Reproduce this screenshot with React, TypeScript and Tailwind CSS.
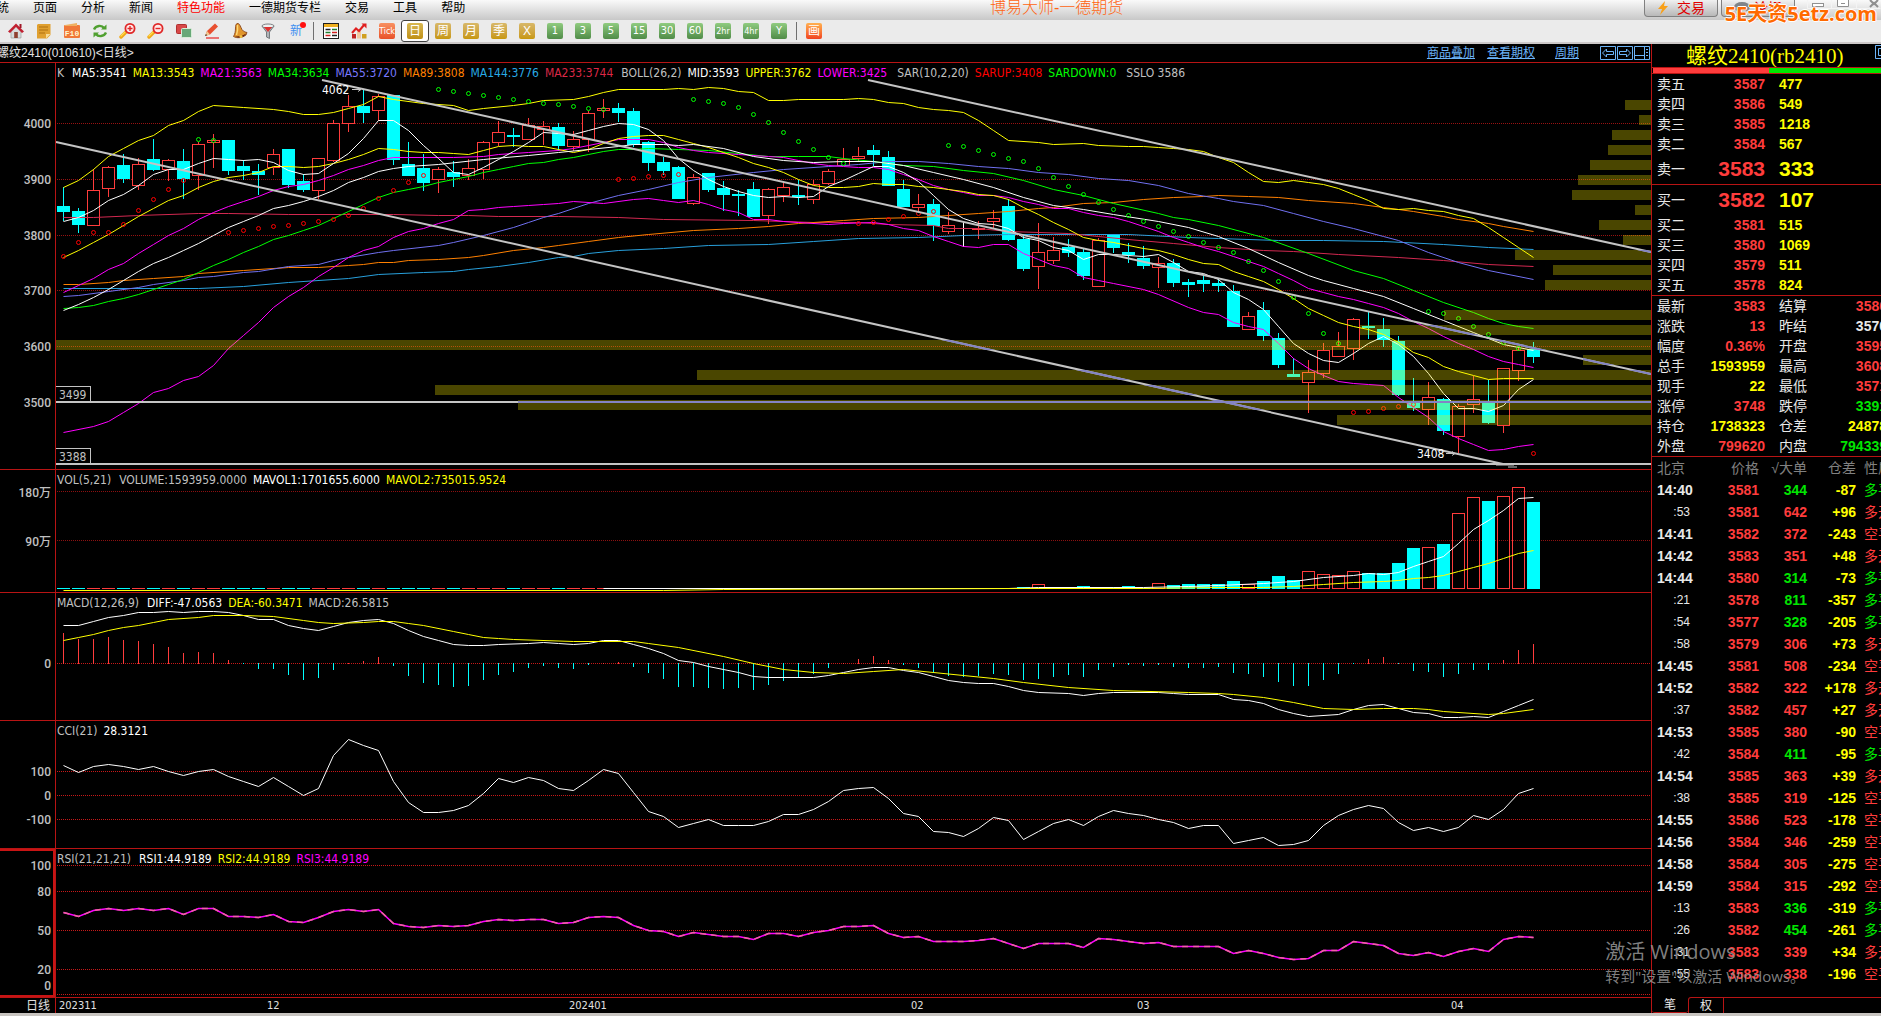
import type { ReactNode } from "react";

type Kind = "up" | "down" | "flat";

interface Quote {
  label: string;
  price: string;
  size: string;
}

// kind, high, low, body top, body bottom (thirds of a pixel under the header)
const CANDLES = `
d381,484,438,455 d444,519,453,494 u326,494,391,494 u317,410,322,385 d282,369,315,356
u294,389,313,374 d237,333,297,329 u297,363,301,328 d267,416,303,356 u246,390,253,346
u222,324,240,247 d240,345,240,332 d300,360,318,332 d312,405,333,344 u267,345,283,322
d267,384,267,374 d343,396,363,389 u295,416,295,391 u180,306,190,299 u105,216,139,190
d88,189,138,158 u102,184,109,151 d106,315,106,299 d246,348,312,347 d282,393,324,368
u321,399,328,358 d303,381,336,350 u297,360,325,344 u243,357,247,326 u183,259,217,247
d204,261,225,231 u174,240,196,238 u183,255,198,206 d189,273,201,258 u213,274,237,257
u153,276,160,238 u117,174,145,149 d129,186,144,158 d144,261,153,255 d243,333,246,308
d291,345,306,332 d318,417,321,417 u342,435,352,428 d339,396,339,389 d363,453,384,404
d390,468,402,407 d366,471,387,471 u384,492,388,464 u369,426,382,404 d360,435,405,411
u360,432,373,416 u327,375,334,368 u264,318,298,314 u261,306,289,293 d255,318,270,285
d273,378,291,378 d360,441,387,441 u402,453,433,442 d417,543,432,498 u456,522,496,514
f486,560,503,505 u483,537,503,508 u450,504,475,484 d417,543,438,540 d528,633,537,627
u489,687,577,617 u531,612,571,599 d537,591,560,579 d567,660,576,647 u534,677,541,677
d525,579,525,564 d549,609,576,585 d558,627,594,618 u591,684,610,622 d597,681,609,669
d657,711,666,675 d648,696,660,672 d657,696,669,678 d675,801,693,801 u756,808,769,808
d726,843,750,828 d819,924,834,915 d894,951,942,951 u900,1059,937,967 u849,954,871,938
u816,889,859,889 u774,900,778,865 d756,837,798,804 d774,861,807,840 d828,1008,843,1005
d954,1053,1029,1044 u966,1095,1012,1048 d1014,1125,1017,1113 u1032,1180,1039,1129
u948,1059,1018,1031 d960,1092,1026,1089 u925,1119,925,1094 u865,963,871,931 d846,909,867,891`
  .trim()
  .split(/\s+/)
  .map((s) => {
    const kind: Kind = s[0] === "u" ? "up" : s[0] === "d" ? "down" : "flat";
    const [high, low, top, bottom] = s.slice(1).split(",").map(Number);
    return { kind, high, low, top, bottom };
  });

// "bar,value" pairs
const MA5 =
  "0,484 1,472 2,451 3,421 4,403 5,376 6,343 7,326 8,328 9,310 10,295 11,296 12,299 13,298 14,306 15,331 16,343 17,338 18,309 19,278 20,235 21,179 22,179 23,209 24,256 25,295 26,337 27,343 28,321 29,297 30,273 31,246 32,217 33,219 34,222 35,210 36,198 37,190 38,191 39,206 40,240 41,294 42,331 43,358 44,378 45,394 46,404 47,412 48,409 49,412 50,407 51,378 52,360 53,340 54,317 55,317 56,336 57,364 58,406 59,447 60,475 61,488 62,493 63,503 64,530 65,540 66,560 67,571 68,597 69,583 70,582 71,584 72,588 73,583 74,607 75,632 76,640 77,657 78,697 79,718 80,748 81,798 82,850 83,880 84,901 85,907 86,878 87,850 88,828 89,852 90,888 91,940 92,1000 93,1043 94,1045 95,1054 96,1036 97,988 98,958";
const MA13 =
  "0,592 1,570 2,547 3,521 4,494 5,468 6,443 7,421 8,406 9,381 10,364 11,352 12,344 13,335 14,319 15,319 16,322 17,319 18,308 19,296 20,283 21,265 22,268 23,274 24,277 25,277 26,280 27,283 28,270 29,259 30,254 31,257 32,259 33,267 34,277 35,267 36,250 37,234 38,229 39,226 40,226 41,237 42,249 43,262 44,275 45,291 46,309 47,322 48,337 49,358 50,376 51,381 52,382 53,377 54,368 55,371 56,373 57,377 58,382 59,386 60,393 61,402 62,406 63,418 64,442 65,463 66,487 67,508 68,530 69,540 70,545 71,555 72,563 73,571 74,583 75,597 76,610 77,613 78,632 79,647 80,664 81,686 82,715 83,745 84,766 85,787 86,798 87,807 88,822 89,846 90,877 91,892 92,919 93,934 94,944 95,956 96,953 97,953 98,955";
const MA21 =
  "0,697 1,674 2,655 3,628 4,608 5,580 6,553 7,526 8,505 9,478 10,457 11,439 12,424 13,409 14,391 15,379 16,373 17,361 18,346 19,328 20,316 21,301 22,290 23,290 24,290 26,292 28,289 29,282 31,277 33,269 34,264 35,256 36,247 37,237 38,236 39,238 40,247 41,262 42,270 43,277 45,281 47,289 48,292 49,301 50,309 51,315 52,317 53,321 54,322 55,328 56,343 57,358 58,374 59,387 60,395 61,404 62,406 63,412 64,424 65,433 66,443 67,445 68,457 69,466 70,472 71,484 72,498 73,512 74,530 75,547 76,562 77,574 78,588 79,603 80,618 81,638 82,661 83,683 84,697 85,708 86,718 87,730 88,742 89,760 90,782 91,805 92,828 93,850 94,868 95,889 96,902 97,911 98,921";
const MID =
  "0,751 1,733 2,712 3,688 4,661 5,634 6,610 7,592 8,571 9,550 10,526 11,502 12,484 13,465 14,445 15,434 16,422 17,408 18,390 19,367 20,352 21,334 22,325 23,319 25,311 28,298 31,285 33,275 35,268 37,257 38,253 40,253 41,256 42,253 44,265 46,289 48,301 50,305 52,304 54,303 56,315 58,337 60,358 62,382 64,412 66,436 68,448 70,461 73,482 75,500 77,528 79,565 81,605 83,645 84,661 86,684 88,709 90,744 92,780 94,816 95,835 96,852 97,861 98,870";
const MA34 =
  "0,745 1,742 2,736 3,724 4,715 5,703 6,688 7,673 8,658 9,637 10,616 11,597 12,577 13,559 14,538 15,525 16,511 17,496 18,475 19,453 20,433 21,411 22,397 23,388 24,378 25,366 26,357 27,348 28,337 29,328 30,319 31,310 32,305 33,298 34,292 35,281 36,274 37,268 38,267 39,265 41,267 43,271 45,279 47,287 49,289 51,289 52,293 54,303 56,315 58,319 60,329 62,340 64,360 66,387 68,405 70,430 73,460 74,472 75,478 77,495 80,530 83,580 86,630 88,653 90,690 92,725 94,757 95,774 96,788 97,797 98,803";
const MA55 =
  "0,709 1,706 3,694 5,682 6,673 8,660 9,652 10,649 12,637 13,634 15,619 17,611 18,601 19,592 21,575 22,571 25,554 26,545 28,526 30,501 31,487 32,472 33,460 35,430 37,406 39,386 41,367 43,352 46,337 48,328 51,317 53,311 55,304 57,304 59,310 61,317 63,325 65,337 67,343 69,353 71,361 73,376 75,398 77,415 78,423 80,436 82,460 84,484 86,503 88,527 89,541 91,575 93,605 95,630 98,658";
const MA89 =
  "0,673 1,673 3,667 4,661 6,653 8,647 9,640 12,629 15,622 17,622 19,616 20,613 21,607 22,607 23,601 25,596 27,590 28,584 30,571 32,560 33,556 35,544 37,532 39,522 42,511 45,505 47,498 49,490 52,481 54,473 57,470 59,466 61,460 63,453 65,445 66,440 68,430 70,425 72,418 74,411 76,409 77,406 79,409 81,412 83,421 86,430 88,440 90,452 92,467 93,476 95,490 96,498 98,512";
const MA144 =
  "0,685 9,685 12,679 15,667 19,655 21,643 24,635 26,632 27,626 29,617 31,606 33,592 34,588 35,580 37,571 40,563 43,556 47,551 50,544 53,535 57,530 60,526 63,522 66,523 71,523 75,530 77,535 81,540 84,541 88,544 92,553 95,562 98,566";
const MA233 =
  "0,472 2,470 5,464 9,460 11,460 15,463 22,463 25,466 27,466 29,469 33,469 37,472 40,478 46,481 50,487 53,487 55,492 58,496 59,503 61,505 63,513 67,520 69,528 71,537 74,549 77,562 80,571 82,574 85,583 89,592 92,599 95,611 98,619";
const UPPER =
  "0,381 1,360 2,327 3,288 4,264 5,240 6,226 7,196 8,181 9,154 10,136 12,141 14,148 15,154 16,163 17,163 18,157 19,145 20,133 21,109 22,118 24,130 26,136 27,149 28,145 30,136 31,128 32,121 34,118 35,109 36,97 37,88 40,88 41,85 42,88 43,82 44,85 45,94 46,97 47,121 48,121 49,118 52,118 53,115 54,118 55,127 56,130 57,142 58,148 59,151 60,157 61,181 62,211 63,241 65,247 66,253 68,248 69,254 71,259 72,257 73,260 74,265 75,266 76,273 77,290 78,306 79,335 80,364 81,367 82,361 83,367 84,373 85,385 86,403 87,421 88,445 89,447 90,443 91,451 92,452 93,466 94,475 95,500 96,530 97,562 98,590";
const LOWER =
  "0,1117 2,1099 3,1084 4,1057 5,1029 6,997 7,985 8,961 9,947 10,914 11,865 12,824 13,787 14,742 15,709 16,681 17,649 18,621 19,592 20,571 21,559 22,532 23,514 24,503 25,490 26,478 27,451 28,446 29,442 30,437 31,436 32,433 33,430 34,424 36,430 38,418 39,415 40,421 41,427 42,421 43,433 44,448 45,457 46,478 47,478 48,484 49,487 51,493 52,490 54,487 55,493 56,505 57,511 58,529 59,544 60,559 61,562 62,553 63,553 64,580 65,597 66,615 67,625 68,652 69,659 70,668 72,688 73,703 75,740 76,755 77,763 78,787 79,797 80,808 81,850 82,893 83,925 84,945 85,963 86,968 87,973 88,976 89,1010 90,1042 91,1072 92,1112 93,1133 94,1152 95,1171 96,1168 97,1159 98,1153";
const SAR_DOWN =
  "9,238 10,241 25,88 26,94 27,100 28,106 29,112 30,118 31,124 32,130 33,133 34,139 35,145 36,148 42,118 43,124 44,130 45,142 46,163 47,187 48,217 49,244 50,268 51,292 52,310 59,256 60,259 61,271 62,283 63,295 64,304 65,325 66,352 67,379 68,403 69,427 70,448 71,466 72,484 73,499 74,514 75,529 76,547 77,562 78,577 79,604 80,631 81,664 82,712 83,760 84,820 85,850 91,754 92,760 93,775 94,799 95,823 96,845 97,865";
const SAR_UP =
  "0,589 1,547 2,517 3,517 4,493 5,451 6,418 7,388 8,361 11,517 12,511 13,505 14,499 15,496 16,490 17,484 18,478 19,466 20,445 21,415 22,391 23,367 24,346 37,358 38,355 39,349 40,346 41,343 53,490 54,487 55,478 56,469 57,460 58,454 86,1057 87,1054 88,1045 89,1039 90,1033 98,1180";

// volume profile: left edge of each row, 15px apart from y=100
const PROFILE = [
  1625, 1639, 1612, 1608, 1590, 1578, 1572, 1635, 1599, 1623, 1515, 1553, 1545, 1651, 1444, 1360, 56,
  1583, 697, 435, 518, 1337,
];

const VOLUME =
  "64,359 65,350 68,356 69,357 70,358 71,356 72,360 73,348 74,352 75,350 76,350 77,350 78,341 79,349 80,341 81,327 82,338 83,314 84,322 85,325 86,314 87,320 88,320 89,290 90,248 91,244 92,237 93,150 94,105 95,116 96,102 97,77 98,118";
const MAVOL1 =
  "36,362 63,362 65,359 68,357 70,358 72,358 75,355 77,352 80,348 82,340 84,329 86,323 87,320 88,322 89,315 90,300 91,286 92,270 93,235 94,195 95,170 96,142 97,108 98,103";
const MAVOL2 =
  "0,366 40,366 44,363 64,362 72,360 77,359 80,357 82,354 84,349 86,345 88,341 89,339 90,334 91,329 92,324 93,312 94,301 95,290 96,277 97,263 98,254";

const MACD_BARS = [
  488, 505, 505, 499, 508, 510, 519, 527, 544, 541, 544, 564, 575, 589, 589, 606, 620, 615, 592, 572,
  567, 556, 581, 609, 629, 635, 640, 637, 620, 606, 598, 587, 581, 587, 589, 578, 572, 570, 584, 601,
  618, 640, 640, 643, 646, 643, 649, 635, 623, 615, 604, 587, 572, 561, 553, 564, 578, 587, 601, 609,
  612, 609, 604, 606, 620, 618, 612, 606, 612, 592, 584, 578, 581, 578, 584, 587, 587, 584, 601, 604,
  612, 626, 637, 637, 620, 604, 575, 561, 556, 575, 595, 598, 612, 604, 592, 592, 564, 536, 519,
];
const DIFF =
  "0,464 1,464 2,455 3,444 4,438 5,430 6,430 7,427 8,430 9,427 10,425 11,430 12,438 13,449 14,449 15,464 16,475 17,478 18,469 19,458 20,452 21,447 22,461 23,478 24,495 25,507 26,518 27,523 28,523 29,518 31,515 32,512 33,517 34,520 35,515 36,509 37,507 38,518 39,529 40,543 41,563 42,571 43,582 44,590 45,599 46,610 47,613 50,613 51,606 52,598 53,589 54,583 55,585 56,593 57,599 58,610 59,619 60,627 61,630 62,630 63,636 64,650 65,653 67,656 68,664 69,658 70,653 73,653 74,658 75,661 77,661 78,675 79,678 80,686 81,703 82,714 83,723 85,717 86,703 87,692 88,687 89,700 90,711 91,714 92,726 93,726 94,723 95,726 96,709 97,690 98,675";
const DEA =
  "0,509 1,500 2,492 3,480 4,472 5,464 6,458 7,449 9,444 10,438 12,438 14,441 16,452 17,458 18,461 20,458 21,455 22,455 23,461 24,466 26,483 27,492 28,498 29,503 30,506 34,511 38,511 39,515 41,528 44,554 46,572 48,589 50,598 52,600 54,594 56,590 58,597 60,606 62,616 64,625 67,641 70,650 75,653 77,656 78,661 80,669 82,683 83,692 84,698 86,701 88,698 90,700 91,703 92,709 95,717 96,714 98,703";
const CCI =
  "0,860 1,881 2,864 3,858 4,864 5,870 6,864 7,878 8,889 9,878 10,872 11,892 12,906 13,918 14,895 15,920 16,946 17,926 18,833 19,786 20,805 21,819 22,904 23,965 24,994 25,994 26,988 27,974 28,940 29,898 30,909 31,895 32,903 33,926 34,932 35,901 36,872 37,884 38,935 39,991 40,1005 41,1036 42,1025 43,1013 44,1028 45,1030 46,1030 47,1019 48,999 49,997 50,985 51,962 52,932 53,926 54,923 55,954 56,996 57,1005 58,1047 59,1050 60,1061 61,1039 62,1008 63,1016 64,1070 65,1045 66,1025 67,1013 68,1030 69,1005 70,988 71,996 72,1002 73,1013 74,1022 75,1039 76,1028 77,1028 78,1081 79,1073 80,1064 81,1087 82,1084 83,1073 84,1028 85,1002 86,985 87,974 88,980 89,1022 90,1042 91,1036 92,1047 93,1036 94,1002 95,1011 96,985 97,940 98,926";
const RSI =
  "0,1276 1,1287 2,1270 3,1262 4,1270 5,1264 6,1268 7,1264 8,1279 9,1264 10,1264 11,1287 12,1287 13,1290 14,1279 15,1301 16,1304 17,1290 18,1273 19,1267 20,1273 21,1267 22,1307 23,1315 24,1318 25,1312 26,1315 27,1312 28,1301 29,1295 30,1298 31,1293 32,1293 33,1307 34,1304 35,1290 36,1287 37,1290 38,1312 39,1324 40,1329 41,1343 42,1332 43,1338 44,1341 45,1341 46,1352 47,1335 48,1335 49,1341 50,1332 51,1324 52,1315 53,1315 54,1312 55,1335 56,1346 57,1343 58,1357 59,1357 60,1357 61,1354 62,1349 63,1363 64,1377 65,1363 66,1363 67,1363 68,1374 69,1349 70,1352 71,1357 72,1363 73,1360 74,1371 77,1371 78,1391 79,1383 80,1391 81,1402 82,1408 83,1405 84,1383 85,1381 86,1357 87,1363 88,1368 89,1391 90,1397 91,1388 92,1399 93,1384 94,1377 95,1386 96,1352 97,1343 98,1346";

const barX = (i: number) => 63 + i * 15;
const priceY = (v: number) => Math.round(60 + v / 3);
const subY = (v: number) => Math.round(460 + v / 2.82);

const pairs = (s: string) => s.split(" ").map((p) => p.split(",").map(Number));

function Series({ data, y, color }: { data: string; y: (v: number) => number; color: string }) {
  const points = pairs(data)
    .map(([i, v]) => `${barX(i) + 0.5},${y(v) + 0.5}`)
    .join(" ");
  return <polyline points={points} fill="none" stroke={color} strokeWidth="1" />;
}

function GridLine({ y, color = "#c81818" }: { y: number; color?: string }) {
  return <line x1="57" x2="1651" y1={y + 0.5} y2={y + 0.5} stroke={color} strokeDasharray="1 1" />;
}

function AxisLabel({ y, children }: { y: number; children: ReactNode }) {
  return (
    <text x="51" y={y + 5} textAnchor="end" fontSize="12" fill="#c0c0c0">
      {children}
    </text>
  );
}

interface LegendItem {
  text: string;
  color: string;
}

interface PaneProps {
  title: string;
  viewBox: string;
  legend: LegendItem[];
  children: ReactNode;
}

function Pane({ title, viewBox, legend, children }: PaneProps) {
  return (
    <section className="relative min-h-0 overflow-hidden border-b border-[#b81414]" aria-label={title}>
      <svg
        className="absolute inset-0 h-full w-full font-medium font-['Roboto','Noto_Sans_CJK_SC',sans-serif]"
        viewBox={viewBox}
        preserveAspectRatio="none"
      >
        {children}
        <line x1="55.5" x2="55.5" y1="0" y2="1016" stroke="#b81414" />
      </svg>
      <div className="relative flex gap-[6px] pl-[57px] pt-[2px] text-[12px] leading-4 whitespace-nowrap font-['DejaVu_Sans_Condensed','Noto_Sans',sans-serif]">
        {legend.map((item) => (
          <span key={item.text} className={item.color}>
            {item.text}
          </span>
        ))}
      </div>
    </section>
  );
}

function PricePane() {
  const bars = PROFILE.map((x, i) => <rect key={i} x={x} y={100 + i * 15} width={1651 - x} height="10" />);
  const trends = (
    <>
      <path d="M56 142 L1503 464 M322 80 L1651 374 M868 80 L1651 252" />
      <path d="M56 402 H1651 M56 464 H1651" />
    </>
  );
  return (
    <Pane
      title="K"
      viewBox="0 63 1651 406"
      legend={[
        { text: "K", color: "text-[#c0c0c0] mr-0.5" },
        { text: "MA5:3541", color: "text-white" },
        { text: "MA13:3543", color: "text-[#ffff00]" },
        { text: "MA21:3563", color: "text-[#ff00ff]" },
        { text: "MA34:3634", color: "text-[#00ff00]" },
        { text: "MA55:3720", color: "text-[#7878ff]" },
        { text: "MA89:3808", color: "text-[#ff8000]" },
        { text: "MA144:3776", color: "text-[#28aae6]" },
        { text: "MA233:3744", color: "text-[#dc2846]" },
        { text: "BOLL(26,2)", color: "text-[#c0c0c0] ml-0.5" },
        { text: "MID:3593", color: "text-white" },
        { text: "UPPER:3762", color: "text-[#ffff00]" },
        { text: "LOWER:3425", color: "text-[#ff00ff]" },
        { text: "SAR(10,2,20)", color: "text-[#c0c0c0] ml-1" },
        { text: "SARUP:3408", color: "text-[#ff0000]" },
        { text: "SARDOWN:0", color: "text-[#00ff00]" },
        { text: "SSLO 3586", color: "text-[#c0c0c0] ml-1" },
      ]}
    >
      <defs>
        <clipPath id="profile-rows">{bars}</clipPath>
      </defs>
      {[4000, 3900, 3800, 3700, 3600, 3500].map((price, i) => (
        <g key={price}>
          <GridLine y={Math.round(123 + i * 55.8)} color="#981212" />
          <AxisLabel y={Math.round(123 + i * 55.8)}>{price}</AxisLabel>
        </g>
      ))}
      <g shapeRendering="crispEdges">
        {CANDLES.map((c, i) => {
          const x = barX(i);
          const top = priceY(c.top);
          const height = Math.max(priceY(c.bottom) - top, 1);
          const color = c.kind === "up" ? "#ff3c3c" : c.kind === "down" ? "#00ffff" : "#ffffff";
          return (
            <g key={i}>
              <rect x={x} y={priceY(c.high)} width="1" height={priceY(c.low) - priceY(c.high)} fill={color} />
              {c.kind === "up" ? (
                <rect x={x - 5.5} y={top + 0.5} width="12" height={height} fill="#000" stroke={color} />
              ) : (
                <rect x={x - 6} y={top} width="13" height={height} fill={color} />
              )}
            </g>
          );
        })}
      </g>
      <Series data={MA144} y={priceY} color="#28a0dc" />
      <Series data={MA233} y={priceY} color="#d22850" />
      <Series data={MA89} y={priceY} color="#ff8000" />
      <Series data={MA55} y={priceY} color="#7070f0" />
      <Series data={MA34} y={priceY} color="#00ff00" />
      <Series data={MA21} y={priceY} color="#ff00ff" />
      <Series data={MA13} y={priceY} color="#ffff00" />
      <Series data={MID} y={priceY} color="#ffffff" />
      <Series data={UPPER} y={priceY} color="#ffff00" />
      <Series data={LOWER} y={priceY} color="#ff00ff" />
      <Series data={MA5} y={priceY} color="#ffffff" />
      {pairs(SAR_DOWN).map(([i, v]) => (
        <circle key={i} cx={barX(i) + 0.5} cy={priceY(v) + 0.5} r="2" fill="none" stroke="#00ff00" />
      ))}
      {pairs(SAR_UP).map(([i, v]) => (
        <circle key={i} cx={barX(i) + 0.5} cy={priceY(v) + 0.5} r="2" fill="none" stroke="#ff0000" />
      ))}
      <g fill="#fff200" fillOpacity="0.29">
        {bars}
      </g>
      <g stroke="#c4c4c4" strokeWidth="2" fill="none">
        {trends}
      </g>
      <g stroke="#8484c4" strokeWidth="2" fill="none" clipPath="url(#profile-rows)">
        {trends}
      </g>
      <path d="M1496 465 h18 M1508 467 h9" stroke="#c4c4c4" strokeWidth="1" />
      <g fill="#000" stroke="#c4c4c4">
        <rect x="55.5" y="386.5" width="35" height="15" />
        <rect x="55.5" y="448.5" width="35" height="15" />
      </g>
      <g fontSize="12" className="font-normal font-['DejaVu_Sans_Condensed','Noto_Sans',sans-serif]">
        <text x="59" y="399" fill="#c0c0c0">
          3499
        </text>
        <text x="59" y="461" fill="#c0c0c0">
          3388
        </text>
        <text x="322" y="94" fill="#fff">
          4062
        </text>
        <text x="1417" y="458" fill="#fff">
          3408
        </text>
      </g>
      <path d="M352 89.5 h9 m-3 -2 l3 2 l-3 2 M1446 453.5 h9 m-3 -2 l3 2 l-3 2" stroke="#c4c4c4" fill="none" />
    </Pane>
  );
}

function VolumePane() {
  const tops = new Map(pairs(VOLUME).map(([i, v]) => [i, v]));
  return (
    <Pane
      title="VOL"
      viewBox="0 470 1651 122"
      legend={[
        { text: "VOL(5,21)", color: "text-[#c0c0c0] mr-0.5" },
        { text: "VOLUME:1593959.0000", color: "text-[#c0c0c0]" },
        { text: "MAVOL1:1701655.6000", color: "text-white" },
        { text: "MAVOL2:735015.9524", color: "text-[#ffff00]" },
      ]}
    >
      <GridLine y={491} color="#8c1010" />
      <GridLine y={540} color="#8c1010" />
      <AxisLabel y={492}>180万</AxisLabel>
      <AxisLabel y={541}>90万</AxisLabel>
      <g shapeRendering="crispEdges">
        {CANDLES.map((c, i) => {
          const x = barX(i);
          const top = subY(tops.get(i) ?? 361);
          const color = c.kind === "down" ? "#00ffff" : "#ff3c3c";
          return c.kind === "down" || top > 586 ? (
            <rect key={i} x={x - 6} y={top} width="13" height={Math.max(589 - top, 1)} fill={color} />
          ) : (
            <rect key={i} x={x - 5.5} y={top + 0.5} width="12" height={588 - top} fill="none" stroke={color} />
          );
        })}
      </g>
      <Series data={MAVOL1} y={subY} color="#ffffff" />
      <Series data={MAVOL2} y={subY} color="#ffff00" />
    </Pane>
  );
}

function MacdPane() {
  return (
    <Pane
      title="MACD"
      viewBox="0 593 1651 127"
      legend={[
        { text: "MACD(12,26,9)", color: "text-[#c0c0c0] mr-0.5" },
        { text: "DIFF:-47.0563", color: "text-white" },
        { text: "DEA:-60.3471", color: "text-[#ffff00]" },
        { text: "MACD:26.5815", color: "text-[#c0c0c0]" },
      ]}
    >
      <GridLine y={663} />
      <AxisLabel y={663}>0</AxisLabel>
      <g shapeRendering="crispEdges">
        {MACD_BARS.map((v, i) => {
          const y = subY(v);
          return v < 573 ? (
            <rect key={i} x={barX(i)} y={y} width="1" height={664 - y} fill="#ff3c3c" />
          ) : (
            <rect key={i} x={barX(i)} y="663" width="1" height={Math.max(y - 663, 1)} fill="#00ffff" />
          );
        })}
      </g>
      <Series data={DIFF} y={subY} color="#ffffff" />
      <Series data={DEA} y={subY} color="#ffff00" />
    </Pane>
  );
}

function CciPane() {
  return (
    <Pane
      title="CCI"
      viewBox="0 721 1651 127"
      legend={[
        { text: "CCI(21)", color: "text-[#c0c0c0]" },
        { text: "28.3121", color: "text-white" },
      ]}
    >
      <GridLine y={771} />
      <GridLine y={795} />
      <GridLine y={819} />
      <AxisLabel y={771}>100</AxisLabel>
      <AxisLabel y={795}>0</AxisLabel>
      <AxisLabel y={819}>-100</AxisLabel>
      <Series data={CCI} y={subY} color="#ffffff" />
    </Pane>
  );
}

function RsiPane() {
  const points = pairs(RSI)
    .map(([i, v]) => `${barX(i) + 0.5},${subY(v) + 0.5}`)
    .join(" ");
  return (
    <Pane
      title="RSI"
      viewBox="0 849 1651 148"
      legend={[
        { text: "RSI(21,21,21)", color: "text-[#c0c0c0] mr-0.5" },
        { text: "RSI1:44.9189", color: "text-white" },
        { text: "RSI2:44.9189", color: "text-[#ffff00]" },
        { text: "RSI3:44.9189", color: "text-[#ff00ff]" },
      ]}
    >
      {[865, 891, 930, 969, 994].map((y) => (
        <GridLine key={y} y={y} />
      ))}
      <AxisLabel y={865}>100</AxisLabel>
      <AxisLabel y={891}>80</AxisLabel>
      <AxisLabel y={930}>50</AxisLabel>
      <AxisLabel y={969}>20</AxisLabel>
      <AxisLabel y={985}>0</AxisLabel>
      <path d="M0 850 H54 V996 H0" fill="none" stroke="#c81414" strokeWidth="2" />
      <polyline points={points} fill="none" stroke="#ff00ff" strokeWidth="1.5" />
      <polyline points={points} fill="none" stroke="#f064a0" strokeWidth="1.5" strokeDasharray="6 5" />
    </Pane>
  );
}

function DateAxis() {
  return (
    <svg
      className="h-[15px] w-full font-['DejaVu_Sans_Condensed','Noto_Sans_CJK_SC',sans-serif]"
      viewBox="0 998 1651 15"
      preserveAspectRatio="none"
      fontSize="11"
      fill="#e0e0e0"
    >
      <line x1="55.5" x2="55.5" y1="998" y2="1013" stroke="#b81414" />
      <text x="50" y="1010" textAnchor="end" fontSize="12">
        日线
      </text>
      <text x="59" y="1009">202311</text>
      <text x="267" y="1009">12</text>
      <text x="569" y="1009">202401</text>
      <text x="911" y="1009">02</text>
      <text x="1137" y="1009">03</text>
      <text x="1451" y="1009">04</text>
    </svg>
  );
}

const MENU = ["系统", "页面", "分析", "新闻", "特色功能", "一德期货专栏", "交易", "工具", "帮助"];

const PERIODS = ["周", "月", "季", "X"];
const MINUTES = ["1", "3", "5", "15", "30", "60", "2hr", "4hr", "Y"];

function ToolButton({ label, children }: { label: string; children: ReactNode }) {
  return (
    <button aria-label={label} className="flex h-[22px] w-7 items-center justify-center">
      {children}
    </button>
  );
}

function Badge({ tone, children }: { tone: string; children: ReactNode }) {
  return (
    <span
      className={`flex h-4 w-4 items-center justify-center overflow-hidden rounded-[2px] leading-4 text-white ${tone}`}
    >
      {children}
    </span>
  );
}

function Magnifier({ plus }: { plus?: boolean }) {
  return (
    <svg width="18" height="18" viewBox="0 0 18 18">
      <path d="M7 10 L2 15" stroke="#f0a818" strokeWidth="3.4" strokeLinecap="round" />
      <path d="M6 10 L2 14" stroke="#ffdc50" strokeWidth="1.2" strokeLinecap="round" />
      <circle cx="11" cy="6.5" r="4.6" fill="#ffe8e8" stroke="#e02828" strokeWidth="1.8" />
      <path d={plus ? "M8.5 6.5 h5 M11 4 v5" : "M8.5 6.5 h5"} stroke="#e02828" strokeWidth="1.4" />
    </svg>
  );
}

function Toolbar() {
  return (
    <div className="flex h-[24px] items-center border-b-2 border-[#ccc8c8] bg-[#ebebeb] pl-[2px]" role="toolbar">
      <ToolButton label="首页">
        <svg width="16" height="16" viewBox="0 0 16 16">
          <path d="M3 8 V15 H13 V8 L8 3 Z" fill="#d8dcdc" stroke="#909494" strokeWidth=".6" />
          <path d="M0 8.5 L8 0.5 L16 8.5 L14 10 L8 4 L2 10 Z" fill="#c02030" />
          <rect x="11.5" y="1" width="2" height="4" fill="#a01828" />
          <rect x="6.2" y="9" width="3.6" height="6" fill="#904030" />
        </svg>
      </ToolButton>
      <ToolButton label="笔记">
        <svg width="16" height="16" viewBox="0 0 16 16">
          <path d="M2 1 H14.5 V12 L11 15.5 H1 V2 Z" fill="#e0a030" />
          <path d="M14.5 11 L10 15.5 V11 Z" fill="#f8dc98" />
          <path d="M3 4 H12 M3 7 H12 M3 10 H9" stroke="#b07010" />
        </svg>
      </ToolButton>
      <ToolButton label="F10">
        <svg width="16" height="16" viewBox="0 0 16 16">
          <rect x="0" y="2" width="16" height="13" rx="1" fill="#f07838" />
          <path d="M1 2 L13 0 V3 H1 Z" fill="#f0b060" />
          <text x="8" y="12.5" textAnchor="middle" fontSize="8" fontWeight="bold" fill="#fff6d0" fontFamily="Liberation Mono">
            F10
          </text>
        </svg>
      </ToolButton>
      <ToolButton label="刷新">
        <svg width="16" height="16" viewBox="0 0 16 16" fill="none" stroke="#50a030" strokeWidth="2.4">
          <path d="M2 6.5 C4 2 10 2 12 5" />
          <path d="M14 9.5 C12 14 6 14 4 11" />
          <path d="M9 6.5 H14.5 V1.5 Z M7 9.5 H1.5 V14.5 Z" fill="#50a030" stroke="none" />
        </svg>
      </ToolButton>
      <ToolButton label="放大">
        <Magnifier plus />
      </ToolButton>
      <ToolButton label="缩小">
        <Magnifier />
      </ToolButton>
      <ToolButton label="叠加">
        <svg width="16" height="16" viewBox="0 0 16 16">
          <rect x="0.5" y="1.5" width="10" height="9" rx="1" fill="#d84848" stroke="#b03030" />
          <rect x="5.5" y="5.5" width="10" height="9" rx="1" fill="#68a878" stroke="#d8ecd8" />
        </svg>
      </ToolButton>
      <ToolButton label="画线">
        <svg width="16" height="16" viewBox="0 0 16 16">
          <path d="M1 13 L3 8 L11 0.5 L14 3.5 L6 11.5 Z" fill="#e85030" />
          <path d="M1 13 L3 8 L6 11.5 Z" fill="#f0c890" />
          <path d="M1 13 l1-2 1.2 1.2z" fill="#303030" />
          <path d="M2 15 H15" stroke="#e84040" strokeWidth="1.4" />
        </svg>
      </ToolButton>
      <ToolButton label="预警">
        <svg width="16" height="16" viewBox="0 0 16 16">
          <path d="M5 0.5 C7 0 8 2 9 4.5 C10 7.500 12 9 15 9.500 L14 12 C10 15 5 15.500 1.500 13.500 C3 11 3.500 8 3.500 5 C3.500 2.500 4 1 5 0.5 Z" fill="#e0952c" stroke="#803810" strokeWidth=".8" />
          <path d="M5.500 2 C6 6 5.500 9 4.500 12" fill="none" stroke="#ffd878" strokeWidth="1.4" />
          <path d="M3 13.500 C7 14 11 12.500 14 10.500 C13 14 7 16 3 13.500 Z" fill="#602010" />
          <circle cx="9" cy="13.500" r="1.5" fill="#f0c040" />
        </svg>
      </ToolButton>
      <ToolButton label="选股">
        <svg width="16" height="16" viewBox="0 0 16 16">
          <path d="M2 3 L6.5 9 V14 L9.5 15.5 V9 L14 3 Z" fill="#b0b4b8" stroke="#606468" strokeWidth=".8" />
          <ellipse cx="8" cy="3" rx="6" ry="2" fill="#f0f0f0" stroke="#606468" strokeWidth=".8" />
          <path d="M4 4 H12 L8 9 Z" fill="#e03030" />
        </svg>
      </ToolButton>
      <ToolButton label="新">
        <span className="relative text-[12px] leading-4 text-[#4090f0]">
          新<i className="absolute -top-px -right-1 h-1.5 w-1.5 rounded-full bg-[#ff1010]" />
        </span>
      </ToolButton>
      <i className="mx-[3px] h-[18px] w-px bg-[#707070]" />
      <ToolButton label="报价">
        <svg width="16" height="16" viewBox="0 0 16 16">
          <rect x="0.5" y="0.5" width="15" height="15" fill="#fff" stroke="#202020" />
          <rect x="1" y="1" width="14" height="3" fill="#f0b020" />
          <path d="M2.5 6.5 h5 M9 12.5 h5" stroke="#202020" strokeWidth="1.4" />
          <path d="M9 6.5 h5 M2.5 9.5 h5" stroke="#208030" strokeWidth="1.4" />
          <path d="M9 9.5 h5 M2.5 12.5 h5" stroke="#d02020" strokeWidth="1.4" />
        </svg>
      </ToolButton>
      <ToolButton label="走势">
        <svg width="16" height="16" viewBox="0 0 16 16">
          <rect x="1" y="11" width="4" height="4.5" fill="#c02020" />
          <rect x="6" y="8" width="4" height="7.5" fill="#f0c8a0" />
          <rect x="11" y="11" width="4.5" height="4.5" fill="#d0a020" />
          <path d="M1 10 L5 5.5 L8 8 L13 2" fill="none" stroke="#e02020" strokeWidth="2" />
          <path d="M10.5 0.5 H15.5 V5.5 Z" fill="#e02020" />
        </svg>
      </ToolButton>
      <ToolButton label="Tick">
        <Badge tone="bg-gradient-to-b from-[#f89060] to-[#e85028] text-[9px] font-['DejaVu_Sans_Condensed',sans-serif]">
          Tick
        </Badge>
      </ToolButton>
      <button
        aria-label="日线"
        className="flex h-[22px] w-7 items-center justify-center rounded-[3px] border border-[#404040] bg-white"
      >
        <Badge tone="bg-gradient-to-b from-[#d8b850] to-[#c09010] text-[12px]">日</Badge>
      </button>
      {PERIODS.map((p) => (
        <ToolButton key={p} label={p}>
          <Badge tone="bg-gradient-to-b from-[#d8b868] to-[#c89808] text-[12px]">{p}</Badge>
        </ToolButton>
      ))}
      {MINUTES.map((m) => (
        <ToolButton key={m} label={m}>
          <Badge tone="bg-gradient-to-b from-[#90cc80] to-[#508c48] font-['DejaVu_Sans_Condensed',sans-serif]">
            <span className={m.length > 2 ? "text-[9px]" : "text-[11px]"}>{m}</span>
          </Badge>
        </ToolButton>
      ))}
      <i className="mx-[3px] h-[18px] w-px bg-[#707070]" />
      <ToolButton label="画">
        <Badge tone="bg-gradient-to-b from-[#ffb050] to-[#f04020] text-[12px]">画</Badge>
      </ToolButton>
    </div>
  );
}

function MenuBar() {
  return (
    <header className="flex h-5 items-start overflow-hidden bg-gradient-to-b from-[#fafafa] to-[#c8c8c8]">
      <nav className="-ml-[15px] flex gap-6 text-[12px] leading-4 text-black">
        {MENU.map((item) => (
          <button key={item} className={item === "特色功能" ? "text-[#ff0000]" : ""}>
            {item}
          </button>
        ))}
      </nav>
      <h1 className="flex-1 pl-1 text-center text-[16px] leading-4 font-light text-[#ff6410]">博易大师-一德期货</h1>
      <div className="flex gap-[3px] text-[14px] leading-4 text-[#e00000]">
        <button className="flex h-[17px] w-[74px] items-center justify-center gap-2 rounded-b-[4px] border border-t-0 border-[#808080] bg-gradient-to-b from-[#f0f0f0] to-[#b8b8b8]">
          <svg width="12" height="14" viewBox="0 0 12 14">
            <path d="M8 0 L1 8 H5 L3 14 L11 5 H7 Z" fill="#f8a018" />
          </svg>
          交易
        </button>
        <button className="flex h-[17px] w-[74px] items-center justify-center gap-1 rounded-b-[4px] border border-t-0 border-[#808080] bg-gradient-to-b from-[#f0f0f0] to-[#b8b8b8]">
          <svg width="16" height="14" viewBox="0 0 16 14">
            <ellipse cx="8" cy="6" rx="8" ry="5" fill="#808488" />
            <path d="M4 9 L3 14 L9 10 Z" fill="#808488" />
          </svg>
          论坛
        </button>
      </div>
      <svg className="ml-3 shrink-0" width="74" height="12" viewBox="0 0 74 12" fill="#fff" stroke="#909090">
        <path d="M0.5 0 V8.5 H73.5 M24.5 0 V8.5 M49.5 0 V8.5" fill="none" stroke="#f4f4f4" />
        <rect x="5.5" y="3.5" width="11" height="3" />
        <path d="M30.5 0 V6.5 H41.5 V0 M34 3.5 H38" />
        <path d="M63 0 L67 4 L71 0 M63 7 L67 3 L71 7" fill="none" strokeWidth="2" />
      </svg>
    </header>
  );
}

function ChartHeader() {
  return (
    <div className="flex h-[19px] items-center overflow-hidden border-b border-[#b81414] text-[12px] leading-4 text-[#e0e0e0]">
      <h2 className="-ml-[3px] flex-1 whitespace-nowrap">螺纹2410(010610)&lt;日线&gt;</h2>
      <div className="flex items-center text-[#6cb4f8] underline">
        <a href="#overlay" className="mr-3">
          商品叠加
        </a>
        <a href="#options" className="mr-5">
          查看期权
        </a>
        <a href="#period" className="mr-[21px]">
          周期
        </a>
      </div>
      <svg className="mr-px shrink-0" width="50" height="15" viewBox="0 0 50 15" fill="none" stroke="#6cb4f8">
        <path d="M.5 .5 h15 v13 h-15z M17.5 .5 h15 v13 h-15z M34.5 .5 h15 v13 h-15z" />
        <path d="M2.5 7 l4-4 v2.5 h7 v3 h-7 v2.5z M30.5 7 l-4-4 v2.5 h-7 v3 h7 v2.5z" />
        <path d="M35 9.5 h10 M44.5 1 v12 M46 3.5 h2 M46 6.5 h2 M46 9.5 h2" />
      </svg>
    </div>
  );
}

const ASKS: Quote[] = [
  { label: "卖五", price: "3587", size: "477" },
  { label: "卖四", price: "3586", size: "549" },
  { label: "卖三", price: "3585", size: "1218" },
  { label: "卖二", price: "3584", size: "567" },
  { label: "卖一", price: "3583", size: "333" },
];

const BIDS: Quote[] = [
  { label: "买一", price: "3582", size: "107" },
  { label: "买二", price: "3581", size: "515" },
  { label: "买三", price: "3580", size: "1069" },
  { label: "买四", price: "3579", size: "511" },
  { label: "买五", price: "3578", size: "824" },
];

const RED = "text-[#ff3c3c]";
const GREEN = "text-[#00e600]";
const YELLOW = "text-[#ffff00]";
const WHITE = "text-[#e8e8e8]";

const STATS: [string, string, string, string, string, string][] = [
  ["最新", "3583", RED, "结算", "3586", RED],
  ["涨跌", "13", RED, "昨结", "3570", WHITE],
  ["幅度", "0.36%", RED, "开盘", "3595", RED],
  ["总手", "1593959", YELLOW, "最高", "3608", RED],
  ["现手", "22", YELLOW, "最低", "3571", RED],
  ["涨停", "3748", RED, "跌停", "3391", GREEN],
  ["持仓", "1738323", YELLOW, "仓差", "24878", YELLOW],
  ["外盘", "799620", RED, "内盘", "794339", GREEN],
];

// time, price, size, open interest change, side
const TICKS: [string, string, string, string, string][] = [
  ["14:40", "3581", "344", "-87", "多平"],
  [":53", "3581", "642", "+96", "多开"],
  ["14:41", "3582", "372", "-243", "空平"],
  ["14:42", "3583", "351", "+48", "多开"],
  ["14:44", "3580", "314", "-73", "多平"],
  [":21", "3578", "811", "-357", "多平"],
  [":54", "3577", "328", "-205", "多平"],
  [":58", "3579", "306", "+73", "多开"],
  ["14:45", "3581", "508", "-234", "空平"],
  ["14:52", "3582", "322", "+178", "多开"],
  [":37", "3582", "457", "+27", "多开"],
  ["14:53", "3585", "380", "-90", "空平"],
  [":42", "3584", "411", "-95", "多平"],
  ["14:54", "3585", "363", "+39", "多开"],
  [":38", "3585", "319", "-125", "空平"],
  ["14:55", "3586", "523", "-178", "空平"],
  ["14:56", "3584", "346", "-259", "空平"],
  ["14:58", "3584", "305", "-275", "空平"],
  ["14:59", "3584", "315", "-292", "空平"],
  [":13", "3583", "336", "-319", "多平"],
  [":26", "3582", "454", "-261", "多平"],
  [":31", "3583", "339", "+34", "多开"],
  [":55", "3583", "338", "-196", "空平"],
];

function QuoteRow({ quote, big }: { quote: Quote; big?: boolean }) {
  return (
    <div
      className={`grid grid-cols-[40px_68px_1fr] items-center pl-[5px] ${big ? "h-[30px] text-[21px]" : "h-5 text-[14px]"}`}
    >
      <span className={`text-[14px] ${WHITE}`}>{quote.label}</span>
      <span className={`text-right font-bold ${RED}`}>{quote.price}</span>
      <span className={`pl-[14px] font-bold ${YELLOW}`}>{quote.size}</span>
    </div>
  );
}

function QuotePanel() {
  return (
    <aside className="flex w-[230px] shrink-0 flex-col overflow-hidden border-l border-[#b81414]">
      <div className="flex min-h-0 w-[240px] flex-1 flex-col">
        <div className="flex h-[23px] items-start">
          <h2 className="flex-1 pl-[34px] text-[21px] leading-6 whitespace-nowrap text-[#ffff00] font-['Liberation_Serif','Noto_Sans_CJK_SC',serif]">
            螺纹2410(rb2410)
          </h2>
          <svg className="mt-px mr-0.5 shrink-0" width="15" height="14" viewBox="0 0 15 14" fill="none" stroke="#6cb4f8">
            <path d="M.5 .5 h14 v13 h-14z M3.5 3.5 h8 v7 h-8z" />
          </svg>
        </div>
        <div className="flex h-[7px] border-y border-[#b81414]">
          <span className="ml-px w-[116px] bg-[#ff3c3c]" />
          <span className="flex-1 bg-[#00e600]" />
        </div>
        <div className="leading-5">
          {ASKS.map((q) => (
            <QuoteRow key={q.label} quote={q} big={q.label === "卖一"} />
          ))}
        </div>
        <div className="border-y border-[#b81414] leading-5">
          {BIDS.map((q) => (
            <QuoteRow key={q.label} quote={q} big={q.label === "买一"} />
          ))}
        </div>
        <div className="border-b border-[#b81414] text-[14px] leading-5">
          {STATS.map(([a, av, ac, b, bv, bc]) => (
            <div key={a} className="grid h-5 grid-cols-[40px_68px_14px_40px_68px] pl-[5px]">
              <span className={WHITE}>{a}</span>
              <span className={`text-right font-bold ${ac}`}>{av}</span>
              <span />
              <span className={WHITE}>{b}</span>
              <span className={`text-right font-bold ${bc}`}>{bv}</span>
            </div>
          ))}
        </div>
        <table className="w-[240px] table-fixed border-collapse text-[14px] leading-[22px] whitespace-nowrap">
          <colgroup>
            <col className="w-[43px]" />
            <col className="w-[64px]" />
            <col className="w-[48px]" />
            <col className="w-[49px]" />
            <col className="w-[36px]" />
          </colgroup>
          <thead>
            <tr className="text-right text-[#808080]">
              <th className="p-0 pl-[5px] text-left font-normal">北京</th>
              <th className="p-0 font-normal">价格</th>
              <th className="p-0 font-normal">√大单</th>
              <th className="p-0 font-normal">仓差</th>
              <th className="p-0 pl-2 text-left font-normal">性质</th>
            </tr>
          </thead>
          <tbody>
            {TICKS.map(([time, price, size, diff, side], i) => (
              <tr key={i} className="h-[22px] text-right font-bold">
                <td className={`p-0 pl-[5px] ${WHITE}`}>
                  {time[0] === ":" ? (
                    <span className="block pr-[5px] text-[12px] font-normal">{time}</span>
                  ) : (
                    <span className="block text-left">{time}</span>
                  )}
                </td>
                <td className={`p-0 ${RED}`}>{price}</td>
                <td className={`p-0 ${side === "多平" ? GREEN : RED}`}>{size}</td>
                <td className={`p-0 ${YELLOW}`}>{diff}</td>
                <td className={`p-0 pl-2 text-left font-normal ${side === "多平" ? GREEN : RED}`}>{side}</td>
              </tr>
            ))}
          </tbody>
        </table>
        <div className={`mt-auto flex h-4 text-[12px] leading-[14px] ${WHITE}`}>
          <button className="w-9 rounded-b-[3px] border-b border-[#b81414]">笔</button>
          <button className="w-9 rounded-tl-[3px] border-x border-t border-[#b81414]">权</button>
          <span className="flex-1 border-t border-[#b81414]" />
        </div>
      </div>
    </aside>
  );
}

export default function App() {
  return (
    <div className="relative flex h-screen flex-col overflow-hidden bg-black font-['Liberation_Sans','Noto_Sans_CJK_SC',sans-serif]">
      <MenuBar />
      <Toolbar />
      <main className="flex min-h-0 flex-1">
        <div className="flex min-w-0 flex-1 flex-col">
          <ChartHeader />
          <div className="grid min-h-0 flex-1 grid-rows-[407fr_123fr_128fr_128fr_149fr]">
            <PricePane />
            <VolumePane />
            <MacdPane />
            <CciPane />
            <RsiPane />
          </div>
          <DateAxis />
        </div>
        <QuotePanel />
      </main>
      <footer className="h-[3px] bg-[#c8c4c0]" />

      {/* Site mark over the window buttons */}
      <div className="absolute top-0 right-1 text-[20px] leading-7 font-bold text-[#ff6a00] [text-shadow:1px_0_#fff,-1px_0_#fff,0_1px_#fff,0_-1px_#fff] font-['Open_Sans','Noto_Sans_CJK_SC',sans-serif]">
        5E天资5etz.com
      </div>

      {/* Activation notice */}
      <div className="pointer-events-none absolute right-[76px] bottom-[30px] whitespace-nowrap text-[#909090]/90 font-['Open_Sans','Noto_Sans_CJK_SC',sans-serif]">
        <p className="text-[20px] leading-7">激活 Windows</p>
        <p className="text-[15px] leading-5">转到"设置"以激活 Windows。</p>
      </div>
    </div>
  );
}
